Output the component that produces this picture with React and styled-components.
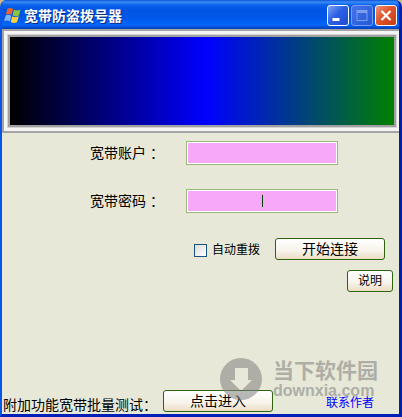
import { useState } from 'react'
import { styled, createGlobalStyle } from 'styled-components'

const fields = [
  { id: 'account', label: '宽带账户', type: 'text' },
  { id: 'password', label: '宽带密码', type: 'password', active: true }
]

function WindowsFlag () {
  return (
    <svg width='17' height='17' viewBox='0 0 15 15' aria-hidden='true'>
      <path d='M3 1.6C4.8.6 6.4.8 8 1.8L6.7 6.9C5.1 5.9 3.5 5.8 1.6 6.7Z' fill='#f0622c' />
      <path d='M8.8 2.2C10.6 3.2 12.4 3.2 14.6 2.2L13.2 7.4C11.2 8.3 9.3 8.3 7.5 7.3Z' fill='#8cc63e' />
      <path d='M1.4 7.5C3.3 6.6 4.9 6.7 6.5 7.7L5.2 12.8C3.6 11.8 2 11.7.1 12.6Z' fill='#7fb4f8' />
      <path d='M7.3 8.1C9.1 9.1 11 9.1 13 8.2L11.6 13.4C9.7 14.3 7.7 14.3 5.9 13.3Z' fill='#fcd041' />
    </svg>
  )
}

function TitleBar () {
  return (
    <Bar>
      <WindowsFlag />
      <Title>宽带防盗拨号器</Title>
      <WindowButton aria-label='最小化'>
        <svg width='20' height='19' viewBox='0 0 19 19'>
          <path d='M4 12h7v3H4z' fill='#fff' />
        </svg>
      </WindowButton>
      <WindowButton aria-label='最大化' disabled>
        <svg width='20' height='19' viewBox='0 0 19 19'>
          <path d='M4 4h11v11H4zM5 7v7h9V7z' fill='#7c9cf0' fillRule='evenodd' />
        </svg>
      </WindowButton>
      <WindowButton aria-label='关闭' $close>
        <svg width='20' height='19' viewBox='0 0 19 19'>
          <path d='M5 5l9 9M14 5l-9 9' stroke='#fff' strokeWidth='2.2' />
        </svg>
      </WindowButton>
    </Bar>
  )
}

function Watermark () {
  return (
    <Mark>
      <svg width='42' height='42' viewBox='0 0 42 42' aria-hidden='true'>
        <path
          d='M21 0a21 21 0 1 0 0 42a21 21 0 1 0 0-42zM15 10h13v12h4L21 33L10 22h5z'
          fill='currentColor'
          fillRule='evenodd'
        />
      </svg>
      <div>
        <MarkName>当下软件园</MarkName>
        <MarkSite>downxia.com</MarkSite>
      </div>
    </Mark>
  )
}

export default function App () {
  const [values, setValues] = useState({ account: '', password: '' })
  const [redial, setRedial] = useState(false)

  const handleChange = (event) => {
    const { name, value } = event.target
    setValues({ ...values, [name]: value })
  }

  return (
    <>
      <GlobalStyle />
      <Window>
        <TitleBar />
        <Client>
          <BannerFrame>
            <Banner />
          </BannerFrame>
          <Form onSubmit={(event) => event.preventDefault()}>
            {fields.map(({ id, label, type, active }) => (
              <Field key={id}>
                <label htmlFor={id}>{label} ：</label>
                <InputBox>
                  <Input id={id} name={id} type={type} value={values[id]} onChange={handleChange} />
                  {active && !values[id] && <Caret />}
                </InputBox>
              </Field>
            ))}
            <Actions>
              <CheckLabel>
                <Checkbox type='checkbox' checked={redial} onChange={() => setRedial(!redial)} />
                自动重拨
              </CheckLabel>
              <Button type='submit' $wide>开始连接</Button>
            </Actions>
            <Help>
              <Button type='button'>说明</Button>
            </Help>
          </Form>
          <Footer>
            <FooterText>附加功能宽带批量测试：</FooterText>
            <Button type='button' $wide>点击进入</Button>
            <AuthorLink href='#author'>联系作者</AuthorLink>
          </Footer>
          <Watermark />
        </Client>
      </Window>
    </>
  )
}

const GlobalStyle = createGlobalStyle`
  * {
    box-sizing: border-box;
  }

  body {
    margin: 0;
    background: #c9b98c;
    color: #000;
    font: 14px/20px 'Liberation Sans', 'Noto Sans CJK SC', sans-serif;
  }

  button, input {
    font: inherit;
  }
`

const Window = styled.main`
  display: flex;
  flex-direction: column;
  min-height: 100vh;
  border: solid;
  border-width: 0 3px 3px 2px;
  border-color: #0831d9 #0020a8 #0020b8 #0855e8;
  border-radius: 7px 7px 0 0;
  background: #0855e8;
`

const Bar = styled.header`
  display: flex;
  align-items: center;
  gap: 2px;
  height: 29px;
  padding: 2px 2px 0 2px;
  border-radius: 5px 5px 0 0;
  background: linear-gradient(
    #0a52d8 0, #3a8cf8 2px, #0a62ea 5px, #0054e3 10px,
    #0057e8 18px, #0066fc 25px, #0050d8 27px, #0040b8 29px
  );
`

const Title = styled.h1`
  flex: 1;
  margin: 0;
  padding-left: 1px;
  color: #fff;
  font-size: 14px;
  font-weight: 700;
  line-height: 20px;
  text-shadow: 1px 1px #0a2a80;
`

const WindowButton = styled.button`
  display: flex;
  width: 22px;
  height: 21px;
  padding: 0;
  border: 1px solid ${({ disabled }) => (disabled ? '#7a9cf0' : '#fff')};
  border-radius: 3px;
  background: ${({ $close, disabled }) =>
    $close
      ? 'linear-gradient(135deg, #f09478, #e0532c 45%, #c83c10)'
      : disabled
        ? 'linear-gradient(135deg, #4474e8, #2458d8)'
        : 'linear-gradient(135deg, #7ca4f8, #2c60e4 45%, #1c4cd0)'};
`

const Client = styled.div`
  position: relative;
  flex: 1;
  display: flex;
  flex-direction: column;
  background: #e7e8d8;
`

const BannerFrame = styled.div`
  padding: 3px 2px 3px 3px;
  border: 2px solid #a4a4a4;
  border-right: 0;
  background: #f4f4f4;
`

const Banner = styled.div`
  height: 94px;
  border: 3px solid #a0a0a0;
  outline: 1px solid #d4d4d4;
  outline-offset: -1px;
  background: linear-gradient(90deg, #000, #00f 51%, #008000) padding-box;
`

const Form = styled.form`
  padding: 8px 6px 0 0;
`

const Field = styled.div`
  display: grid;
  grid-template-columns: 96px 152px;
  align-items: center;
  margin-bottom: 24px;
  padding-left: 88px;
`

const InputBox = styled.div`
  position: relative;
`

const Input = styled.input`
  display: block;
  width: 100%;
  height: 24px;
  padding: 0 4px;
  border: 1px solid #9cb878;
  border-radius: 0;
  outline: 0;
  background: #f8a8f8;
  box-shadow: inset 0 0 0 1px #fff;
  text-align: center;
`

const Caret = styled.span`
  position: absolute;
  top: 6px;
  left: 50%;
  width: 1px;
  height: 12px;
  background: #004000;
`

const Actions = styled.div`
  display: flex;
  justify-content: flex-end;
  gap: 15px;
  padding: 1px 8px 0 0;
`

const CheckLabel = styled.label`
  display: flex;
  align-items: center;
  gap: 5px;
  padding-top: 2px;
  font-size: 12px;
`

const Checkbox = styled.input`
  appearance: none;
  width: 13px;
  height: 13px;
  margin: 0;
  border: 1px solid #1c5180;
  background: linear-gradient(135deg, #dcdcd7, #fff);

  &:checked {
    background: #21a121;
  }
`

const Button = styled.button`
  width: ${({ $wide }) => ($wide ? '110px' : '46px')};
  height: 22px;
  padding: 0;
  border: 1px solid #2c6410;
  border-radius: 3px;
  background: linear-gradient(#fff, #f6f3ea 60%, #ecdcc4);
  color: #000;
  font-size: ${({ $wide }) => ($wide ? '14px' : '12px')};
  line-height: 20px;
`

const Help = styled.div`
  display: flex;
  justify-content: flex-end;
  padding-top: 10px;
`

const Footer = styled.footer`
  display: flex;
  align-items: flex-start;
  height: 24px;
  margin-top: auto;
  padding: 0 25px 0 1px;
`

const FooterText = styled.span`
  flex: 0 0 160px;
  padding-top: 5px;
  line-height: 20px;
  white-space: nowrap;
`

const AuthorLink = styled.a`
  margin-left: auto;
  padding-top: 3px;
  color: #00f;
  font-size: 12px;
  text-decoration: none;
`

const Mark = styled.div`
  position: absolute;
  right: 21px;
  bottom: 14px;
  display: flex;
  align-items: center;
  gap: 11px;
  color: #808080;
  opacity: 0.55;
  pointer-events: none;
`

const MarkName = styled.div`
  font-size: 21px;
  font-weight: 700;
  line-height: 24px;
`

const MarkSite = styled.div`
  font-size: 16px;
  font-weight: 700;
  line-height: 16px;
`
